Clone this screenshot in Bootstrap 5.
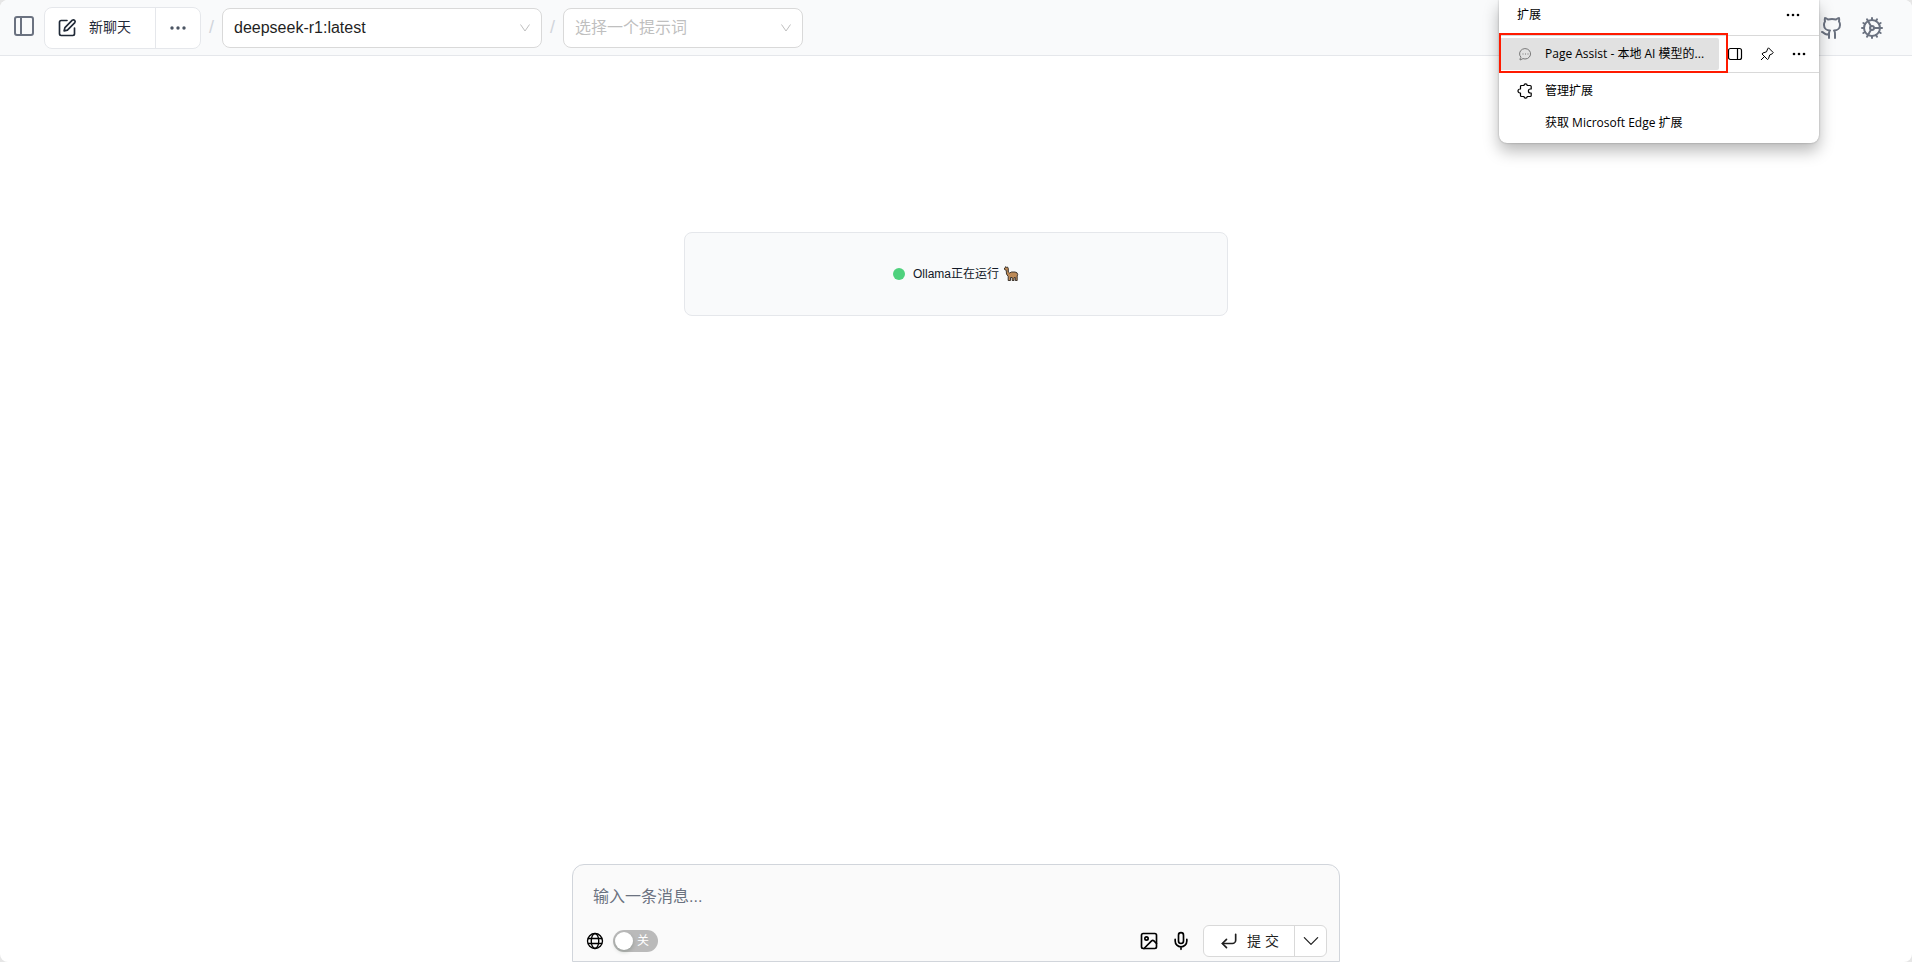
<!DOCTYPE html>
<html lang="zh-CN">
<head>
<meta charset="utf-8">
<meta name="viewport" content="width=device-width, initial-scale=1">
<title>Page Assist</title>
<link href="https://cdn.jsdelivr.net/npm/bootstrap@5.3.0/dist/css/bootstrap.min.css" rel="stylesheet">
<style>
  body { background: #e6e6e6; font-family: "Liberation Sans", "Noto Sans CJK SC", sans-serif; color: #1f2937; }
  svg { display: block; flex: none; }
  .line-icon { fill: none; stroke: currentColor; stroke-width: 2; stroke-linecap: round; stroke-linejoin: round; }
  .app-shell { background: #fff; border-radius: 8px; overflow: hidden; }
  .top-bar { background: #f9fafb; border-bottom: 1px solid #e5e7eb; height: 56px; padding: 0 28px 0 12px; }
  .plain-btn { border: 0; background: none; padding: 0; color: inherit; }
  .muted { color: #6b7280; }
  .new-chat { height: 42px; border: 1px solid #e5e7eb; border-radius: 8px; background: #fff; }
  .new-chat .btn { border: 0; border-radius: 0; font-size: 14px; color: #1f2937; }
  .new-chat .chat-main { padding: 0 24px 0 12px; gap: 12px; }
  .new-chat .chat-more { padding: 0 12px; border-left: 1px solid #e5e7eb; color: #4b5563; }
  .slash { color: #d1d5db; font-size: 18px; width: 21px; text-align: center; }
  .picker { height: 40px; border: 1px solid #d9d9d9; border-radius: 8px; padding: 0 36px 0 11px; font-size: 16px; color: #1f1f1f; line-height: 38px;
    background: #fff url("data:image/svg+xml,%3Csvg xmlns='http://www.w3.org/2000/svg' viewBox='0 0 12 12' fill='none' stroke='%23bfbfbf' stroke-width='1'%3E%3Cpath d='M1.500 2.500 6 9l4.500-6.500'/%3E%3C/svg%3E") no-repeat right 10px center / 12px 12px; }
  .picker-model { width: 320px; }
  .picker-prompt { width: 240px; color: #bfbfbf; }
  .status-area { padding-top: 176px; }
  .status-card { max-width: 544px; height: 84px; background: #f9fafb; border: 1px solid #e5e7eb; border-radius: 8px; font-size: 12px; color: #111827; }
  .status-dot { width: 12px; height: 12px; border-radius: 50%; background: #4fd17d; }
  .composer { max-width: 768px; background: #fafafa; border: 1px solid #d1d5db; border-radius: 12px 12px 0 0; padding: 12px 12px 4px; color: #000; }
  .composer textarea { border: 0; background: none; resize: none; height: 40px; padding: 8px; font-size: 16px; line-height: 24px; display: block; outline: 0; }
  .composer textarea::placeholder { color: #6b7280; }
  .web-switch { position: relative; width: 45px; height: 22px; }
  .web-switch input { appearance: none; width: 45px; height: 22px; margin: 0; border-radius: 11px; background: #bababa; display: block; }
  .web-switch::before { content: ""; position: absolute; left: 2px; top: 2px; width: 18px; height: 18px; border-radius: 50%; background: #fff; box-shadow: 0 2px 4px rgba(0,35,11,.2); }
  .web-switch span { position: absolute; left: 24px; top: 0; font-size: 12px; line-height: 22px; color: #fff; }
  .submit-group { height: 32px; border: 1px solid #d9d9d9; border-radius: 6px; background: #fff; margin-left: 4px; }
  .submit-group .btn { border: 0; border-radius: 0; font-size: 14px; line-height: 22px; padding: 0; color: #1f1f1f; }
  .submit-group .send { padding: 0 15px; gap: 8px; }
  .submit-group .more { width: 32px; border-left: 1px solid #d9d9d9; }
  .ext-menu { position: absolute; top: 0; right: 93px; width: 320px; background: #fff; border-radius: 0 0 8px 8px; font: 12px/16px "Open Sans", "Noto Sans CJK SC", sans-serif; color: #000;
    box-shadow: 0 0 2px rgba(0,0,0,.3), 0 8px 16px rgba(0,0,0,.28); padding-bottom: 4px; }
  .ext-head { height: 35px; padding: 0 18px 6px; }
  .ext-row { position: relative; border: 1px solid #d9d9d9; border-width: 1px 0; height: 38px; }
  .ext-name { width: 220px; height: 32px; background: #e1e1e1; padding-left: 18px; gap: 12px; border-radius: 0 2px 2px 0; }
  .ext-tools { gap: 16px; padding-left: 8px; }
  .ext-mark { position: absolute; left: 0; top: -3px; width: 229px; height: 40px; border: 2px solid #ff1a00; pointer-events: none; }
  .ext-links { padding-top: 2px; }
  .ext-link { height: 32px; padding-left: 18px; gap: 12px; color: #000; text-decoration: none; }
  .ext-slot { width: 16px; }
</style>
</head>
<body>
<div class="app-shell d-flex flex-column min-vh-100 position-relative">
  <header class="top-bar d-flex align-items-center">
    <button class="plain-btn muted me-2 pb-1" aria-label="侧边栏">
      <svg class="line-icon" width="24" height="24" viewBox="0 0 24 24"><rect x="3" y="3" width="18" height="18" rx="2"/><path d="M9 3v18"/></svg>
    </button>
    <div class="new-chat d-flex overflow-hidden">
      <button class="btn chat-main d-flex align-items-center">
        <svg class="line-icon" width="20" height="20" viewBox="0 0 24 24"><path d="M12 3H5a2 2 0 0 0-2 2v14a2 2 0 0 0 2 2h14a2 2 0 0 0 2-2v-7"/><path d="M18.400 2.600a2.170 2.170 0 0 1 3 3L12.500 14.500l-4 1 1-4Z"/></svg>
        <span>新聊天</span>
      </button>
      <button class="btn chat-more d-flex align-items-center" aria-label="更多">
        <svg width="20" height="20" viewBox="0 0 20 20" fill="currentColor"><circle cx="4" cy="10" r="1.700"/><circle cx="10" cy="10" r="1.700"/><circle cx="16" cy="10" r="1.700"/></svg>
      </button>
    </div>
    <span class="slash">/</span>
    <select class="form-select picker picker-model" aria-label="模型"><option>deepseek-r1:latest</option></select>
    <span class="slash">/</span>
    <select class="form-select picker picker-prompt" aria-label="提示词"><option>选择一个提示词</option></select>
    <div class="ms-auto d-flex gap-3 muted">
      <a href="#" class="muted" aria-label="GitHub"><svg class="line-icon" width="24" height="24" viewBox="0 0 24 24"><path d="M15 22v-4a4.800 4.800 0 0 0-1-3.500c3 0 6-2 6-5.500.08-1.250-.27-2.480-1-3.500.28-1.150.28-2.350 0-3.500 0 0-1 0-3 1.500-2.640-.5-5.360-.5-8 0C6 2 5 2 5 2c-.3 1.150-.3 2.350 0 3.500A5.400 5.400 0 0 0 4 9c0 3.500 3 5.500 6 5.500-.39.49-.68 1.050-.85 1.650-.17.6-.22 1.230-.15 1.850v4"/><path d="M9 18c-4.510 2-5-2-7-2"/></svg></a>
      <a href="#" class="muted" aria-label="设置"><svg class="line-icon" width="24" height="24" viewBox="0 0 24 24"><path d="M12 20a8 8 0 1 0 0-16 8 8 0 0 0 0 16Z"/><path d="M12 14a2 2 0 1 0 0-4 2 2 0 0 0 0 4Z"/><path d="M12 2v2M12 22v-2M17 20.660l-1-1.730M11 10.270 7 3.340M20.660 17l-1.730-1M3.340 7l1.730 1M14 12h8M2 12h2M20.660 7l-1.730 1M3.340 17l1.730-1M17 3.340l-1 1.730M11 13.730l-4 6.930"/></svg></a>
    </div>
  </header>

  <main class="status-area flex-grow-1">
    <div class="status-card mx-auto d-flex align-items-center justify-content-center">
      <span class="status-dot me-2"></span>
      <span>Ollama正在运行</span>
      <svg class="ms-1" width="16" height="16" viewBox="0 0 16 16" aria-label="羊驼"><path d="M1.500 3.500V2l1-.5V.7l1 .6L4.500 1l.8 1.500V6l1.200 1 2-1H12l2 .8.7 1.700-.5 1.500v4.500h-1.900V11.500l-1.300.2V14.500H9.200V11.500H7.500v3H5.200V10.500L3.500 8 3.200 4.300Z" fill="#bd8a57" stroke="#2f2823" stroke-width=".9" stroke-linejoin="round"/></svg>
    </div>
  </main>

  <form class="composer mx-auto w-100">
    <textarea class="w-100" rows="1" placeholder="输入一条消息..." aria-label="消息"></textarea>
    <div class="d-flex align-items-center justify-content-between mt-2">
      <div class="d-flex align-items-center gap-2">
        <svg width="20" height="20" viewBox="0 0 24 24" fill="none" stroke="currentColor" stroke-width="1.600"><circle cx="12" cy="12" r="9"/><ellipse cx="12" cy="12" rx="4.500" ry="9"/><path d="M3.500 9h17M3.500 15h17"/></svg>
        <label class="web-switch"><input type="checkbox" role="switch" aria-label="联网搜索"><span>关</span></label>
      </div>
      <div class="d-flex align-items-center gap-2">
        <button type="button" class="plain-btn me-1" aria-label="图片"><svg class="line-icon" width="20" height="20" viewBox="0 0 24 24"><rect x="3" y="3" width="18" height="18" rx="2"/><circle cx="9" cy="9" r="2"/><path d="m21 15-3.090-3.090a2 2 0 0 0-2.820 0L6 21"/></svg></button>
        <button type="button" class="plain-btn" aria-label="语音"><svg class="line-icon" width="20" height="20" viewBox="0 0 24 24"><path d="M12 2a3 3 0 0 0-3 3v7a3 3 0 0 0 6 0V5a3 3 0 0 0-3-3Z"/><path d="M19 10v2a7 7 0 0 1-14 0v-2M12 19v3"/></svg></button>
        <div class="submit-group d-flex overflow-hidden">
          <button type="submit" class="btn send d-flex align-items-center"><svg class="line-icon" width="20" height="20" viewBox="0 0 24 24"><path d="m9 10-5 5 5 5"/><path d="M20 4v7a4 4 0 0 1-4 4H4"/></svg><span>提 交</span></button>
          <button type="button" class="btn more d-flex align-items-center justify-content-center" aria-label="更多选项"><svg width="20" height="20" viewBox="0 0 24 24" fill="none" stroke="currentColor" stroke-width="1.500" stroke-linecap="round" stroke-linejoin="round"><path d="m4 8 8 8 8-8"/></svg></button>
        </div>
      </div>
    </div>
  </form>

  <aside class="ext-menu">
    <div class="ext-head d-flex align-items-center justify-content-between">
      <span>扩展</span>
      <button class="plain-btn" aria-label="更多"><svg width="16" height="16" viewBox="0 0 16 16"><circle cx="3" cy="8" r="1.300"/><circle cx="8" cy="8" r="1.300"/><circle cx="13" cy="8" r="1.300"/></svg></button>
    </div>
    <div class="ext-row d-flex align-items-center">
      <button class="plain-btn ext-name d-flex align-items-center">
        <svg width="16" height="16" viewBox="0 0 16 16" fill="none" stroke="#777"><path d="M4 11.300A5.500 5.200 0 1 1 8 13L6 12.600 3 14l.3-2Z"/><path d="M5.500 8h1M8 8h1M10.500 8h1"/></svg>
        <span class="text-nowrap">Page Assist - 本地 AI 模型的...</span>
      </button>
      <div class="ext-tools d-flex align-items-center">
        <button class="plain-btn" aria-label="侧栏"><svg width="16" height="16" viewBox="0 0 16 16" fill="none" stroke="#000" stroke-width="1.200"><rect x="1.500" y="2.500" width="13" height="11" rx="2"/><path d="M10.500 2.500v11"/></svg></button>
        <button class="plain-btn" aria-label="固定"><svg width="16" height="16" viewBox="0 0 16 16" fill="none" stroke="#000" stroke-linejoin="round"><path d="m9.500 1.800 4.700 4.700-.8 1.200-2.700 1.300-1.200 3.700-1 .8L3 8l.8-1 3.700-1.200L8.600 3ZM5.500 10.500 2 14"/></svg></button>
        <button class="plain-btn" aria-label="更多"><svg width="16" height="16" viewBox="0 0 16 16"><circle cx="3" cy="8" r="1.300"/><circle cx="8" cy="8" r="1.300"/><circle cx="13" cy="8" r="1.300"/></svg></button>
      </div>
      <div class="ext-mark"></div>
    </div>
    <nav class="ext-links">
      <a href="#" class="ext-link d-flex align-items-center"><svg width="16" height="16" viewBox="0 0 16 16" fill="none" stroke="#000" stroke-width="1.200" stroke-linejoin="round"><path d="M4.500 2.500H7a1.600 1.600 0 0 1 3.200 0h3q1 0 1 1V6h-.8a2 2 0 0 0 0 4h.8v2.500q0 1-1 1h-3a1.600 1.600 0 0 1-3.200 0H4.500q-1 0-1-1V10H3a2 2 0 0 1 0-4h.5V3.500q0-1 1-1Z"/></svg><span>管理扩展</span></a>
      <a href="#" class="ext-link d-flex align-items-center"><span class="ext-slot"></span><span>获取 Microsoft Edge 扩展</span></a>
    </nav>
  </aside>
</div>
<script src="https://cdn.jsdelivr.net/npm/bootstrap@5.3.0/dist/js/bootstrap.bundle.min.js"></script>
</body>
</html>
